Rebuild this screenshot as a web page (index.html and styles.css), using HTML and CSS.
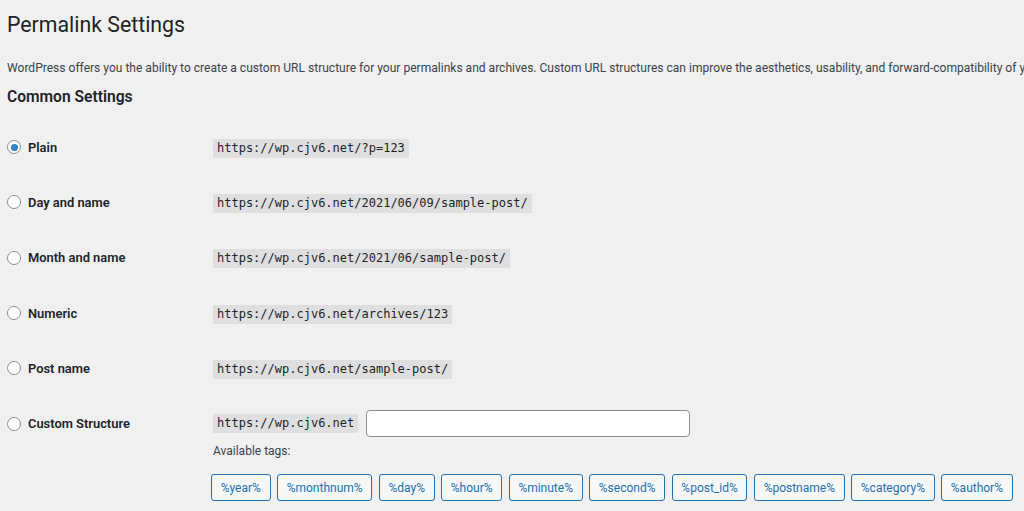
FILE: index.html
```html
<!DOCTYPE html>
<html lang="en">
<head>
    <meta charset="UTF-8">
    <meta name="viewport" content="width=device-width, initial-scale=1.0">
    <title>Permalink Settings</title>
    <link rel="stylesheet" href="styles.css">
</head>
<body>
    <div class="wrap">
        <h1 class="page-title">Permalink Settings</h1>
        <p class="page-desc">WordPress offers you the ability to create a custom URL structure for your permalinks and archives. Custom URL structures can improve the aesthetics, usability, and forward-compatibility of your links.</p>
        <h2 class="section-title">Common Settings</h2>

        <div class="form-table">
            <div class="form-row">
                <label class="row-label"><span class="radio checked"></span>Plain</label>
                <div class="row-field"><code>https://wp.cjv6.net/?p=123</code></div>
            </div>
            <div class="form-row">
                <label class="row-label"><span class="radio"></span>Day and name</label>
                <div class="row-field"><code>https://wp.cjv6.net/2021/06/09/sample-post/</code></div>
            </div>
            <div class="form-row">
                <label class="row-label"><span class="radio"></span>Month and name</label>
                <div class="row-field"><code>https://wp.cjv6.net/2021/06/sample-post/</code></div>
            </div>
            <div class="form-row">
                <label class="row-label"><span class="radio"></span>Numeric</label>
                <div class="row-field"><code>https://wp.cjv6.net/archives/123</code></div>
            </div>
            <div class="form-row">
                <label class="row-label"><span class="radio"></span>Post name</label>
                <div class="row-field"><code>https://wp.cjv6.net/sample-post/</code></div>
            </div>
            <div class="form-row custom-row">
                <label class="row-label"><span class="radio"></span>Custom Structure</label>
                <div class="row-field custom-field">
                    <div class="custom-line">
                        <code>https://wp.cjv6.net</code>
                        <input class="text-input" type="text" value="">
                    </div>
                    <div class="tags-label">Available tags:</div>
                    <div class="tags">
                        <button class="tag">%year%</button>
                        <button class="tag">%monthnum%</button>
                        <button class="tag">%day%</button>
                        <button class="tag">%hour%</button>
                        <button class="tag">%minute%</button>
                        <button class="tag">%second%</button>
                        <button class="tag">%post_id%</button>
                        <button class="tag">%postname%</button>
                        <button class="tag">%category%</button>
                        <button class="tag">%author%</button>
                    </div>
                </div>
            </div>
        </div>
    </div>
</body>
</html>
```

FILE: styles.css
```css
* { margin: 0; padding: 0; box-sizing: border-box; }
body {
    font-family: Roboto, "Liberation Sans", sans-serif;
    background: #f0f0f1;
    color: #1d2327;
    overflow: hidden;
}
.wrap { padding-left: 7px; }
.page-title {
    font-size: 21.3px;
    font-weight: 400;
    line-height: 28px;
    margin-top: 11px;
}
.page-desc {
    font-size: 12.05px;
    line-height: 18px;
    color: #3c434a;
    white-space: nowrap;
    margin-top: 19.5px;
}
.section-title {
    font-size: 15.6px;
    font-weight: 600;
    line-height: 22px;
    margin-top: 9px;
    margin-bottom: 12px;
}
.form-row {
    display: flex;
    align-items: center;
    height: 55.33px;
}
.row-label {
    width: 206px;
    flex-shrink: 0;
    display: flex;
    align-items: center;
    font-size: 12.9px;
    font-weight: 600;
}
.radio {
    width: 14px;
    height: 14px;
    border: 1px solid #8c8f94;
    border-radius: 50%;
    background: #fff;
    margin-right: 7px;
    position: relative;
}
.radio.checked::after {
    content: '';
    position: absolute;
    width: 7px;
    height: 7px;
    border-radius: 50%;
    background: #3582c4;
    top: 2.5px;
    left: 2.5px;
}
code {
    font-family: "DejaVu Sans Mono", monospace;
    font-size: 12px;
    line-height: 14px;
    padding: 2px 4px 3px;
    background: rgba(0,0,0,0.07);
    display: inline-block;
    color: #1d2327;
}
.custom-row {
    align-items: flex-start;
    height: auto;
    padding-top: 14px;
}
.custom-row .row-label { height: 27px; }
.custom-line { display: flex; align-items: center; }
.text-input {
    width: 324px;
    height: 27px;
    margin-left: 8px;
    border: 1px solid #8c8f94;
    border-radius: 4px;
    background: #fff;
}
.tags-label {
    font-size: 12px;
    line-height: 14px;
    color: #3c434a;
    margin-top: 7px;
}
.tags {
    display: flex;
    gap: 6.5px;
    margin-top: 16px;
    margin-left: -2px;
}
.tag {
    font-family: Roboto, "Liberation Sans", sans-serif;
    font-size: 12px;
    height: 27px;
    padding: 0 8.7px;
    border: 1px solid #2271b1;
    border-radius: 3px;
    background: #f6f7f7;
    color: #2271b1;
    white-space: nowrap;
    flex-shrink: 0;
}
```
